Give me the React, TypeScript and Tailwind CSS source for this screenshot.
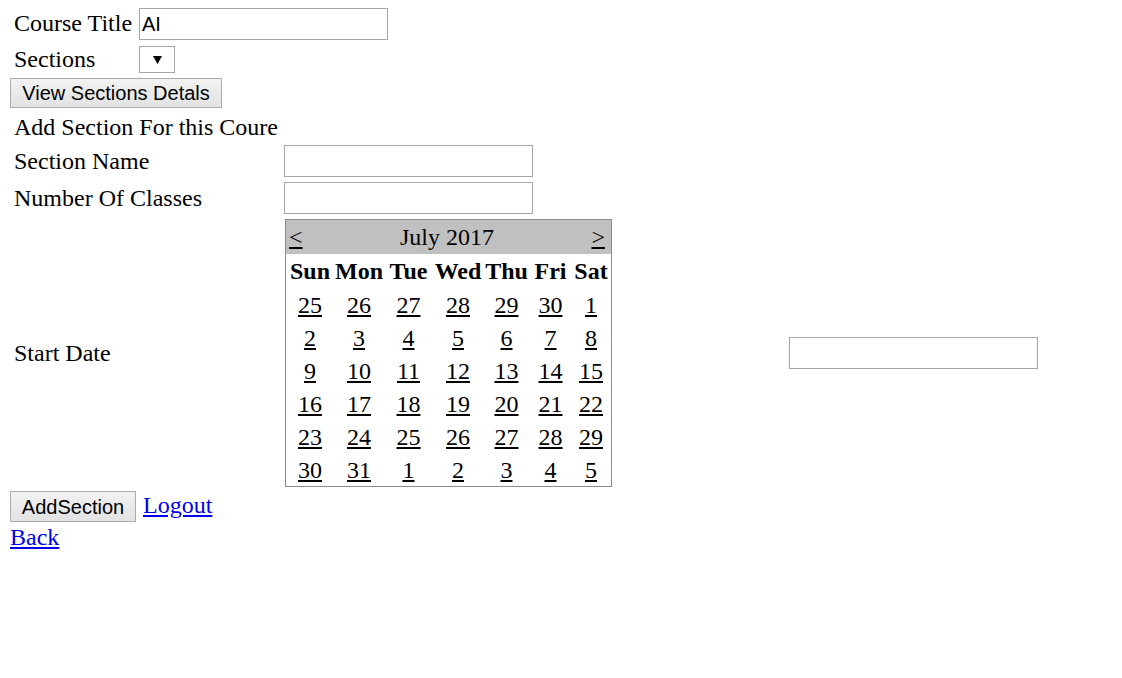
import React from 'react';

const weeks: number[][] = [
  [25, 26, 27, 28, 29, 30, 1],
  [2, 3, 4, 5, 6, 7, 8],
  [9, 10, 11, 12, 13, 14, 15],
  [16, 17, 18, 19, 20, 21, 22],
  [23, 24, 25, 26, 27, 28, 29],
  [30, 31, 1, 2, 3, 4, 5],
];

const dayNames = ['Sun', 'Mon', 'Tue', 'Wed', 'Thu', 'Fri', 'Sat'];

function TextBox({ value = '' }: { value?: string }) {
  return (
    <input
      type="text"
      defaultValue={value}
      className="block w-[249px] h-[32px] border border-[#a6a6a6] bg-white px-[2px] text-[20px] font-['Liberation_Sans',sans-serif] text-black outline-none"
    />
  );
}

function Button({ label, width }: { label: string; width: string }) {
  return (
    <button
      className={`${width} border border-[#acacac] bg-gradient-to-b from-[#f2f2f2] to-[#e2e2e2] text-[20px] leading-none font-['Liberation_Sans',sans-serif] text-black`}
    >
      {label}
    </button>
  );
}

function Calendar() {
  return (
    <div className="w-[327px] border border-[#8c8c8c] bg-white">
      <div className="h-[34px] bg-[#c0c0c0] flex items-center justify-between px-[3px]">
        <a href="#" className="underline text-black">&lt;</a>
        <span>July 2017</span>
        <a href="#" className="underline text-black pr-[3px]">&gt;</a>
      </div>
      <div className="grid grid-cols-[48px_50px_49px_50px_47px_41px_40px]">
        {dayNames.map((d) => (
          <div key={d} className="h-[34px] flex items-center justify-center font-bold">
            {d}
          </div>
        ))}
        {weeks.flat().map((n, i) => (
          <div key={i} className="h-[33px] flex items-center justify-center">
            <a href="#" className="underline text-black">{n}</a>
          </div>
        ))}
      </div>
    </div>
  );
}

export default function App() {
  return (
    <div className="min-h-screen bg-white pl-[10px] pt-[6px] font-['Liberation_Serif',serif] text-[24px] text-black">
      <div className="flex items-center h-[36px]">
        <span className="w-[129px] pl-[4px] -mt-[2px]">Course Title</span>
        <TextBox value="AI" />
      </div>
      <div className="flex items-center h-[35px]">
        <span className="w-[129px] pl-[4px] -mt-[2px]">Sections</span>
        <div className="w-[36px] h-[27px] border border-[#a6a6a6] bg-white flex items-center justify-center">
          <svg width="9" height="8" viewBox="0 0 9 8">
            <path d="M0 0 H9 L4.5 8 Z" fill="#000" />
          </svg>
        </div>
      </div>
      <div className="flex mt-[1px]">
        <Button label="View Sections Detals" width="w-[212px] h-[30px]" />
      </div>
      <div className="h-[37px] flex items-center pl-[4px]">Add Section For this Coure</div>

      <div className="flex flex-col gap-[5px]">
        <div className="flex items-center h-[32px]">
          <span className="w-[274px] pl-[4px]">Section Name</span>
          <TextBox />
        </div>
        <div className="flex items-center h-[32px]">
          <span className="w-[274px] pl-[4px]">Number Of Classes</span>
          <TextBox />
        </div>
        <div className="flex items-center">
          <span className="w-[275px] pl-[4px]">Start Date</span>
          <Calendar />
          <div className="ml-[177px] flex">
            <TextBox />
          </div>
        </div>
      </div>

      <div className="flex items-center mt-[4px] h-[31px]">
        <Button label="AddSection" width="w-[126px] h-[31px]" />
        <a href="#" className="ml-[7px] -mt-[3px] underline text-[#0000ee]">Logout</a>
      </div>
      <div className="-mt-[3px]">
        <a href="#" className="underline text-[#0000ee]">Back</a>
      </div>
    </div>
  );
}
